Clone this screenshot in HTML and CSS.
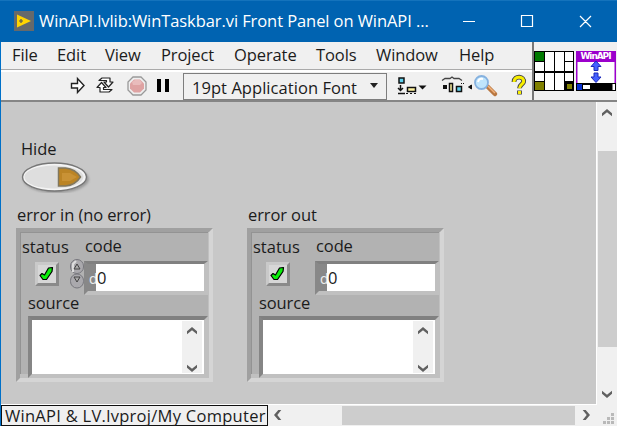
FILE: index.html
```html
<!DOCTYPE html>
<html lang="en">
<head>
<meta charset="utf-8">
<title>WinAPI.lvlib:WinTaskbar.vi Front Panel</title>
<link rel="stylesheet" href="styles.css">
</head>
<body>
<svg width="0" height="0" class="defs">
  <defs>
    <symbol id="up" viewBox="0 0 10 8"><path d="M0 4.300 5 0l5 4.300v3L5 3.300 0 7.300z" fill="#606060"/></symbol>
    <symbol id="down" viewBox="0 0 10 8"><path d="M0 3.700 5 8l5-4.300v-3L5 4.700 0 .7z" fill="#606060"/></symbol>
    <symbol id="check" viewBox="0 0 15 16"><path d="M1 9.500 3 7.500l2.500 1.500L9.500 2l4-.5-.5 4L7.500 13.500H4z" fill="#0bef0b" stroke="#000" stroke-width="1.200" stroke-linejoin="round"/></symbol>
  </defs>
</svg>
<div class="window">
  <header class="titlebar">
    <svg class="app" width="20" height="20"><path d="M0 0h20v20H0z" fill="#66696b"/><path d="M3 3.500 17 10 3 16.500z" fill="#ffd400"/><path d="M5 10h4M7 8v4" stroke="#555" stroke-width="1.200"/></svg>
    <h1>WinAPI.lvlib:WinTaskbar.vi Front Panel on WinAPI ...</h1>
    <svg class="controls" width="136" height="20" fill="none" stroke="#fff" stroke-width="1.200"><path d="M0 10.500h12M58.500 4.500h11v11h-11zM117 5l11 11M128 5l-11 11"/></svg>
  </header>
  <div class="head">
    <div class="bars">
      <nav class="menu"><span>File</span><span>Edit</span><span>View</span><span>Project</span><span>Operate</span><span>Tools</span><span>Window</span><span>Help</span></nav>
      <div class="toolbar">
        <svg class="run" width="102" height="24">
          <path d="M1.500 9.500h6v-5l6.500 7-6.500 7v-4.500h-6z" fill="#fff" stroke="#222" stroke-width="1.400"/>
          <g fill="#fff" stroke="#222" stroke-width="1.200" stroke-linejoin="round"><path d="M29 6.500l3-2.500h8v4h3l-4.500 5-4.500-5h2.500V6.500z"/><path d="M42 15.500l-3 2.500h-9v-4.500h-3l4.500-5 4.500 5h-2.500v2z"/></g>
          <path d="M63 3h8l5 5v8l-5 5h-8l-5-5V8z" fill="#eee" stroke="#999" stroke-width="1.300"/><path d="M64 5.500h6l4 4v5l-4 4h-6l-4-4v-5z" fill="#dfa3a3"/><path d="M62 8l3-2h5l2 3-2 2h-7z" fill="#e9bcbc"/>
          <path d="M87 5h4v13h-4zM95 5h4v13h-4z" fill="#000"/>
        </svg>
        <div class="font"><span>19pt Application Font</span><svg width="8" height="5"><path d="M0 0h8L4 5z" fill="#222"/></svg></div>
        <svg class="tools" width="134" height="28" fill="none" stroke="#111">
          <path d="M2 4h5v5H2z" fill="#5fd0ee" stroke-width="1.500"/><path d="M3.500 11v6M1 14l2.500 2.500L6 14M1 19.500h7" stroke-width="1.500"/><path d="M9 19.500h12" stroke-dasharray="2 2"/><path d="M10.500 13.500h8v4h-8z" fill="#fff3a0" stroke-width="1.500"/><path d="M21.500 11.500h8l-4 4z" fill="#111" stroke="none"/>
          <path d="M45 6.500l3-2h5l2-1.500 2 1.500h5l3 2" stroke="#444" stroke-width="1.300"/><path d="M46 11h4v4h-4z" fill="#111" stroke="none"/><path d="M52.500 9.500h3v8h-3z" fill="#fff3a0" stroke-width="1.500"/><path d="M59.500 12.500h5v5h-5z" fill="#63d5ee" stroke-width="1.500"/><path d="M64 9.500h3" stroke-dasharray="1 1"/><path d="M74.500 11v4l-3-2z" fill="#111"/>
          <path d="M91 13l7 7" stroke="#b97842" stroke-width="4.500" stroke-linecap="round"/><path d="M91 12l7 7" stroke="#f2b27c" stroke-width="1.500"/><circle cx="84.500" cy="8.500" r="6.500" fill="#bfe4fb" stroke="#85b1df" stroke-width="1.800"/><path d="M81 8q1-4 5-3" stroke="#fff" stroke-width="2"/>
          <path d="M117 8c0-7 11-6 9.500.2-.5 2-4 2.300-4 6M122.500 16.500v4" stroke="#444" stroke-width="4.800"/><path d="M117 8c0-7 11-6 9.500.2-.5 2-4 2.300-4 6M122.500 17v3" stroke="#f8ee00" stroke-width="3"/>
        </svg>
      </div>
    </div>
    <div class="connector">
      <svg width="40" height="40"><path d="M0 0h40v40H0z"/><g fill="#fff"><path d="M1 11h9v9H1zM1 22h9v8H1zM11 1h9v19h-9zM11 22h9v17h-9zM21 1h9v19h-9zM21 22h9v17h-9zM31 1h8v9h-8zM31 11h8v9h-8zM31 22h8v8h-8z"/></g><path d="M1 1h9v9H1z" fill="#007a00"/><path d="M1 31h9v8H1zM33 33h5v5h-5z" fill="#808000"/></svg>
      <svg width="40" height="40"><path d="M0 0h40v40H0z" fill="#9b00cc"/><path d="M1.500 11h37v21h-37z" fill="#fff"/><text x="20" y="8" text-anchor="middle" textLength="31" class="vi">WinAPI</text><path d="M20 10l5 5.500H22v4h-4v-4h-3zM18 22h4v4h3L20 31.500l-5-5.500H18z" fill="#4461ff" stroke="#1b28bb"/><path d="M0 32h40v8H0z"/><path d="M1 33h5v6H1z" fill="#0830d0"/><path d="M7 34h7v4H7zM36.500 33H39v6h-2.500z" fill="#fff"/></svg>
    </div>
  </div>
  <main class="work">
    <section class="canvas">
      <div class="hide"><label>Hide</label>
        <svg width="72" height="36"><ellipse cx="35" cy="22" rx="33" ry="14" fill="#999" class="shade"/><ellipse cx="33.500" cy="20" rx="32" ry="14" fill="#f4f4f4" stroke="#777" stroke-width="1.400"/><ellipse cx="33" cy="20" rx="29.500" ry="11.500" fill="#dedede"/><path d="M37.500 11h7q10 1 15 9-5 8-15 9h-7z" fill="#bb8425" stroke="#80775f" stroke-width="1.500"/><path d="M41 16h8l7 4-7 4h-8z" fill="#c99235"/></svg>
      </div>
      <div class="clusters">
        <article><label class="name">error in (no error)</label>
          <div class="cluster"><div class="row">
            <div class="status"><label>status</label><div class="led"><svg width="15" height="16"><use href="#check"/></svg></div></div>
            <div class="code"><label>code</label><div class="field"><i>d</i><b>0</b></div></div>
            <svg class="spin" width="16" height="30"><rect x=".5" y=".5" width="13" height="14" rx="6.500" fill="#aaa9ad" stroke="#77777d"/><rect x=".5" y="15" width="13" height="14" rx="6.500" fill="#aaa9ad" stroke="#77777d"/><path d="M3 13V5l3-3" stroke="#ddd" stroke-width="2" fill="none"/><path d="M4 10l3-5 3 5zM4 18h6l-3 5z" fill="#aaa" stroke="#444"/></svg>
          </div><label class="source">source</label><div class="box"><div class="scroll"><svg width="10" height="8"><use href="#up"/></svg><svg width="10" height="8"><use href="#down"/></svg></div></div></div>
        </article>
        <article><label class="name">error out</label>
          <div class="cluster"><div class="row">
            <div class="status"><label>status</label><div class="led"><svg width="15" height="16"><use href="#check"/></svg></div></div>
            <div class="code"><label>code</label><div class="field"><i>d</i><b>0</b></div></div>
          </div><label class="source">source</label><div class="box"><div class="scroll"><svg width="10" height="8"><use href="#up"/></svg><svg width="10" height="8"><use href="#down"/></svg></div></div></div>
        </article>
      </div>
    </section>
    <aside class="vscroll"><svg width="10" height="8"><use href="#up"/></svg><div class="thumb"></div><svg width="10" height="8"><use href="#down"/></svg></aside>
  </main>
  <footer class="bottom"><div class="context">WinAPI &amp; LV.lvproj/My Computer</div>
    <svg class="left" width="8" height="10"><path d="M4.300 0h3L3.300 5l4 5h-3L0 5z" fill="#606060"/></svg><div class="hthumb"></div><svg class="right" width="8" height="10"><path d="M.7 0h3L8 5l-4.300 5h-3l4-5z" fill="#606060"/></svg>
    <svg class="grip" width="11" height="11" fill="#b9b9b9"><path d="M8 0h3v3H8zM4 4h3v3H4zM8 4h3v3H8zM0 8h3v3H0zM4 8h3v3H4zM8 8h3v3H8z"/></svg>
  </footer>
</div>
</body>
</html>
```
FILE: styles.css
```css
* { box-sizing: border-box; }
body { margin: 0; overflow: hidden; background: #f0f0f0; color: #1b1b1b; font: 16.5px/20px "Open Sans", sans-serif; letter-spacing: -.1px; }
svg { display: block; flex: none; }
.defs { position: absolute; }
label { display: block; white-space: nowrap; }
.window { width: 617px; height: 426px; display: flex; flex-direction: column; border-left: 1px solid #0070c8; }
.titlebar { height: 42px; flex: none; background: #0063b1; color: #fff; display: flex; align-items: center; border-top: 1px solid #1473bc; padding-left: 13px; margin-left: -1px; }
.app { margin: -1px 0 0 1px; }
h1 { margin: -2px 0 0 5px; width: 424px; font-size: 16.5px; font-weight: 400; white-space: nowrap; letter-spacing: -.08px; }
.controls { margin-top: -1px; }
.head { height: 60px; flex: none; display: flex; border-bottom: 2px solid #858585; }
.bars { width: 531px; flex: none; }
.menu { height: 28px; display: grid; grid-template-columns: 45px 48px 56px 73px 82px 60px 83px auto; padding: 3px 0 0 11px; border-bottom: 1px solid #aaa; }
.toolbar { height: 30px; display: flex; border-top: 2px solid #fff; padding-left: 69px; }
.run { margin-top: 2px; }
.font { width: 204px; height: 27px; flex: none; margin: 1px 0 0 11px; border: 1px solid #7d7d7d; display: flex; align-items: center; justify-content: space-between; padding: 3px 9px 0 8px; white-space: nowrap; letter-spacing: .05px; }
.font svg { margin: -5px -1px 0 0; }
.tools { margin: 2px 0 0 10px; }
.connector { flex: 1; border-left: 2px solid #777; padding: 9px 0 0; display: flex; gap: 2px; }
.vi { fill: #fff; font: 700 9px "DejaVu Sans", sans-serif; letter-spacing: 0; }
.work { height: 303px; flex: none; display: flex; }
.canvas { width: 596px; height: 303px; background: #c8c8c8; border-right: 1px solid #fff; border-bottom: 1px solid #fff; }
.hide { padding: 37px 0 0 20px; height: 103px; }
.hide label { height: 18px; }
.shade { filter: blur(1px); }
.clusters { display: flex; gap: 34px; padding-left: 15px; }
article { width: 197px; }
.name { margin-left: 1px; height: 23px; }
.cluster { width: 197px; height: 154px; background: #b2b2b2; border: 4px solid; border-color: #a0a0a0 #d5d5d5 #d5d5d5 #a0a0a0; box-shadow: inset -1px -4px #c0c0c0, inset 1px 1px #939393; padding: 3px 0 0 2px; }
.row { height: 58px; display: flex; position: relative; }
.status { width: 62px; padding-top: 2px; letter-spacing: 0; }
.led { width: 24px; height: 24px; margin: 5px 0 0 13px; border: 3px solid; border-color: #c9c9c9 #8a8a8a #8a8a8a #c9c9c9; background: #d7d7d7; padding: 1px 0 0 1px; }
.code label { margin: 1px 0 5px 1px; }
.field { width: 124px; height: 34px; border: 4px solid; border-color: #808080 #c0c0c0 #c0c0c0 #888; border-top-width: 3px; display: flex; background: #fff; line-height: 27px; }
.field i { width: 8px; background: #888; color: #eee; font-style: normal; font-size: 14px; overflow: hidden; padding: 1px 0 0 1px; }
.field b { font-weight: 400; padding: 0 0 0 1px; }
.spin { position: absolute; left: 48px; top: 24px; }
.source { margin: 0 0 3px 6px; }
.box { width: 180px; height: 62px; margin-left: 6px; background: #fff; border: 4px solid; border-color: #808080 #c0c0c0 #c0c0c0 #858585; padding: 1px 2px 1px 0; }
.scroll { width: 20px; height: 52px; background: #f0f0f0; margin-left: auto; display: flex; flex-direction: column; justify-content: space-between; align-items: center; padding: 6px 1px 1px 0; }
.vscroll { width: 20px; display: flex; flex-direction: column; align-items: center; }
.vscroll svg { margin-top: 7px; }
.thumb { width: 19px; height: 196px; margin: 34px 0; background: #cdcdcd; }
.vscroll .thumb + svg { margin-top: 9px; }
.bottom { height: 21px; flex: none; display: flex; }
.context { width: 267px; height: 21px; border: 1px solid #111; padding-left: 3px; white-space: nowrap; line-height: 19px; letter-spacing: .28px; }
.left { margin: 5px 0 0 6px; }
.hthumb { width: 233px; height: 19px; margin: 1px 0 0 60px; background: #cdcdcd; }
.right { margin: 5px 0 0 7px; }
.grip { margin: 8px 0 0 13px; }
```
